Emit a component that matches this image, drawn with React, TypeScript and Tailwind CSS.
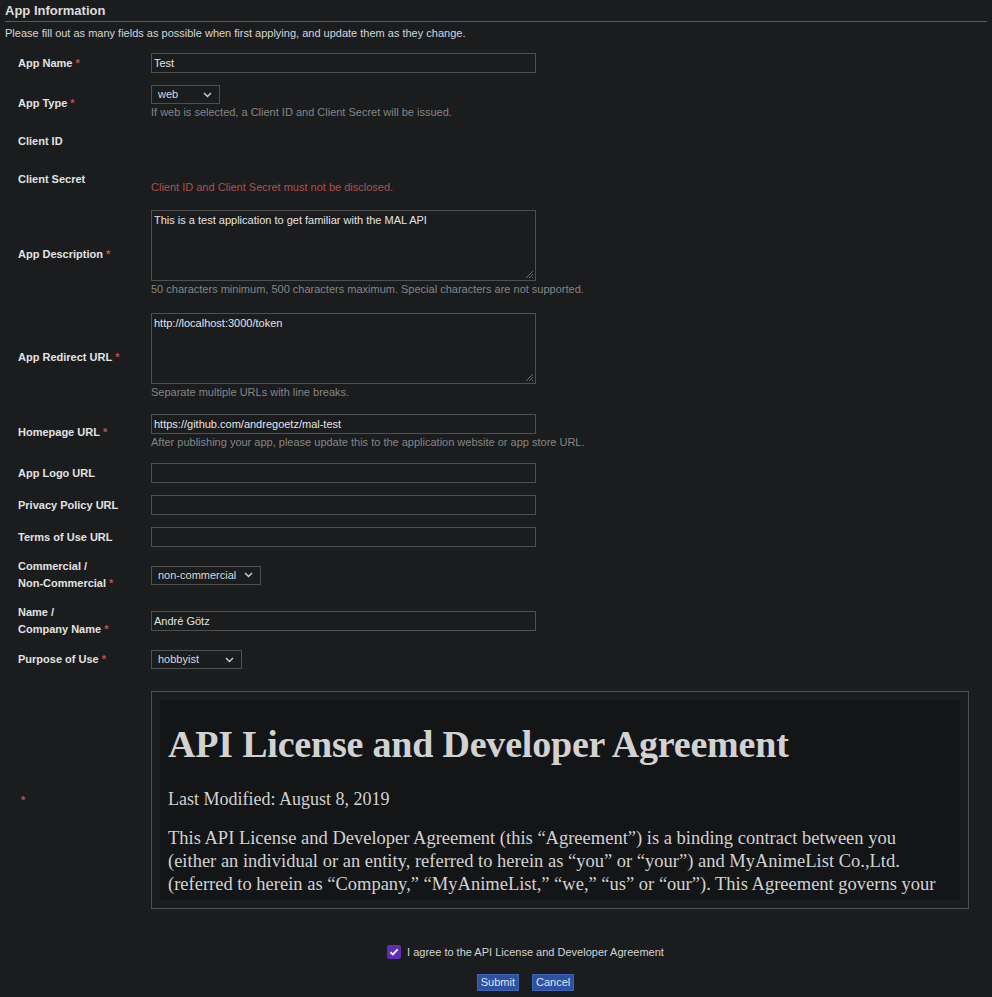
import type { ReactNode } from "react";

const Star = () => <span className="ml-[3px] text-[#c24f4f]">*</span>;

function Row({
	label,
	required,
	className = "py-[6px]",
	children,
}: {
	label: ReactNode;
	required?: boolean;
	className?: string;
	children?: ReactNode;
}) {
	return (
		<div className={`flex items-center ${className}`}>
			<div className="w-[146px] shrink-0 pl-[13px] text-[11px] font-bold leading-[17px] text-[#e2e2e2]">
				{label}
				{required ? <Star /> : null}
			</div>
			<div className="flex-1">{children}</div>
		</div>
	);
}

function Help({ children, red }: { children: ReactNode; red?: boolean }) {
	return (
		<p
			className={`text-[11px] leading-[17px] ${red ? "text-[#b04f4f]" : "text-[#858585]"}`}
		>
			{children}
		</p>
	);
}

function TextInput({ value = "" }: { value?: string }) {
	return (
		<input
			readOnly
			value={value}
			className="block h-[20px] w-[385px] border border-[#4f4f4f] bg-transparent px-[2px] text-[11px] text-[#e4e4e4] outline-none"
		/>
	);
}

function Select({ value, width }: { value: string; width: string }) {
	return (
		<div
			className={`flex h-[19px] items-center justify-between border border-[#4f4f4f] pl-[6px] pr-[7px] text-[11px] text-[#d8d8d8] ${width}`}
		>
			<span>{value}</span>
			<svg width="9" height="6" viewBox="0 0 9 6" fill="none">
				<path d="M1 1l3.5 3.5L8 1" stroke="#d0d0d0" strokeWidth="1.4" />
			</svg>
		</div>
	);
}

function TextArea({ value }: { value: string }) {
	return (
		<div className="relative h-[71px] w-[385px] border border-[#4f4f4f] px-[2px] py-[2px] text-[11px] leading-[14px] text-[#e4e4e4]">
			{value}
			<svg
				className="absolute bottom-[1px] right-[1px]"
				width="9"
				height="9"
				viewBox="0 0 9 9"
			>
				<path d="M8 1L1 8M8 4L4 8M8 7L7 8" stroke="#6a6a6a" strokeWidth="1" />
			</svg>
		</div>
	);
}

export default function App() {
	return (
		<div className="min-h-screen bg-[#1b1c1e] px-[5px] pb-[6px] font-['Liberation_Sans',Arial,sans-serif] text-[#dadada]">
			<h2 className="border-b border-[#5a5a5a] pb-[3px] pt-[3px] text-[13px] font-bold leading-[15px] text-[#dcdcdc]">
				App Information
			</h2>
			<p className="mt-[4px] text-[11px] leading-[14px] text-[#d4d6da]">
				Please fill out as many fields as possible when first applying, and
				update them as they change.
			</p>

			<div className="mt-[7px]">
				<Row label="App Name" required>
					<TextInput value="Test" />
				</Row>
				<Row label="App Type" required>
					<Select value="web" width="w-[69px]" />
					<Help>If web is selected, a Client ID and Client Secret will be issued.</Help>
				</Row>
				<Row label="Client ID" />
				<Row label="Client Secret">
					<div className="h-[17px]" />
					<Help red>Client ID and Client Secret must not be disclosed.</Help>
				</Row>
				<Row label="App Description" required className="pb-[6px] pt-[8px]">
					<TextArea value="This is a test application to get familiar with the MAL API" />
					<Help>
						50 characters minimum, 500 characters maximum. Special characters
						are not supported.
					</Help>
				</Row>
				<Row label="App Redirect URL" required className="pb-[7px] pt-[9px]">
					<TextArea value="http://localhost:3000/token" />
					<Help>Separate multiple URLs with line breaks.</Help>
				</Row>
				<Row label="Homepage URL" required>
					<TextInput value="https://github.com/andregoetz/mal-test" />
					<Help>
						After publishing your app, please update this to the application
						website or app store URL.
					</Help>
				</Row>
				<Row label="App Logo URL">
					<TextInput />
				</Row>
				<Row label="Privacy Policy URL">
					<TextInput />
				</Row>
				<Row label="Terms of Use URL">
					<TextInput />
				</Row>
				<Row
					label={
						<>
							Commercial /<br />
							Non-Commercial
						</>
					}
					required
					className="pb-[6px] pt-[5px]"
				>
					<Select value="non-commercial" width="w-[110px]" />
				</Row>
				<Row
					label={
						<>
							Name /<br />
							Company Name
						</>
					}
					required
				>
					<TextInput value="André Götz" />
				</Row>
				<Row label="Purpose of Use" required>
					<Select value="hobbyist" width="w-[91px]" />
				</Row>
				<Row label="" required className="pb-[6px] pt-[16px]">
					<div className="h-[218px] w-[818px] border border-[#4f4f4f] p-[8px]">
						<div className="h-full overflow-hidden bg-[#141517] px-[8px] font-['Liberation_Serif','Times_New_Roman',serif] text-[#d2d2d2]">
							<h1 className="pt-[22px] text-[38px] font-bold leading-[44px] tracking-[-0.2px]">
								API License and Developer Agreement
							</h1>
							<p className="mt-[22px] text-[18px] leading-[23px]">
								Last Modified: August 8, 2019
							</p>
							<p className="mt-[16px] whitespace-nowrap text-[18.5px] leading-[23px]">
								This API License and Developer Agreement (this “Agreement”) is a
								binding contract between you
								<br />
								(either an individual or an entity, referred to herein as “you”
								or “your”) and MyAnimeList Co.,Ltd.
								<br />
								(referred to herein as “Company,” “MyAnimeList,” “we,” “us” or
								“our”). This Agreement governs your
							</p>
						</div>
					</div>
				</Row>
			</div>

			<div className="mt-[29px] flex flex-col items-center gap-[13px] pl-[59px]">
				<label className="flex items-center gap-[6px] text-[11px] text-[#d4d4d4]">
					<span className="flex h-[14px] w-[14px] items-center justify-center rounded-[2px] bg-[#5f2eb3]">
						<svg width="10" height="10" viewBox="0 0 10 10" fill="none">
							<path d="M1.5 5.2l2.3 2.3L8.6 2.4" stroke="#fff" strokeWidth="1.8" />
						</svg>
					</span>
					I agree to the API License and Developer Agreement
				</label>
				<div className="flex gap-[13px]">
					<button className="h-[17px] border border-[#3f62b4] bg-[#2e51a2] px-[3px] text-[11px] leading-[15px] text-[#dfe4ef]">
						Submit
					</button>
					<button className="h-[17px] border border-[#3f62b4] bg-[#2e51a2] px-[3px] text-[11px] leading-[15px] text-[#dfe4ef]">
						Cancel
					</button>
				</div>
			</div>
		</div>
	);
}
